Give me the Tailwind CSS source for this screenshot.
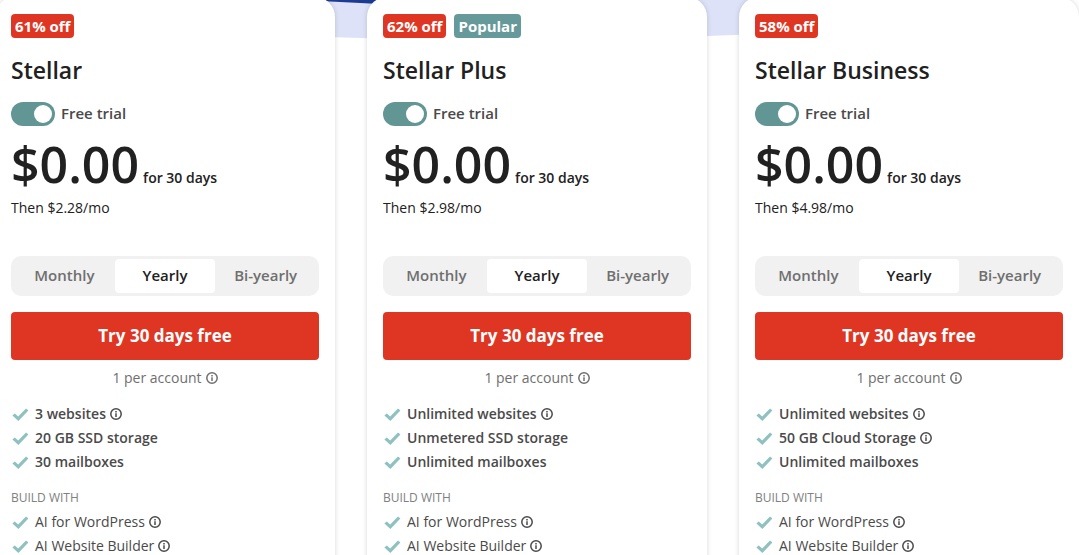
<!DOCTYPE html>
<html lang="en">
<head>
  <meta charset="UTF-8" />
  <meta name="viewport" content="width=device-width, initial-scale=1.0" />
  <title>Hosting Plans</title>
  <script src="https://cdn.jsdelivr.net/npm/@tailwindcss/browser@4"></script>
</head>
<body class="bg-white text-[#4a4a4a] font-['Open_Sans',sans-serif] overflow-x-hidden">

  <!-- Shared icons -->
  <svg class="hidden">
    <symbol id="icon-check" viewBox="0 0 18 16">
      <path d="M1.4 9.6 L3.8 7.4 L7.2 10.4 L15 2.4 L17.4 4.6 L7.4 15 Z" fill="#8fc1c1" />
    </symbol>
    <symbol id="icon-info" viewBox="0 0 12 12">
      <circle cx="6" cy="6" r="5.2" fill="none" stroke="currentColor" stroke-width="1.5" />
      <path d="M6 5.2V9M6 3V4.4" fill="none" stroke="currentColor" stroke-width="1.5" />
    </symbol>
  </svg>

  <main class="relative flow-root">
    <!-- Hero background behind the cards -->
    <svg class="absolute left-0 top-0 w-full h-10" viewBox="0 0 1079 40" preserveAspectRatio="none" aria-hidden="true">
      <path d="M300 0H780V33Q540 45 300 36Z" fill="#dde2f8" />
      <path d="M300 0H440V7Z" fill="#1c3c94" />
    </svg>

    <!-- Plan cards -->
    <section id="plans" class="relative grid grid-cols-3 gap-8 -ml-[5px] -mt-[3px]"></section>
  </main>

  <script>
    const plans = [
      { id: "stellar", name: "Stellar", off: "61% off", then: "$2.28/mo",
        features: [["3 websites", true], ["20 GB SSD storage", false], ["30 mailboxes", false]] },
      { id: "plus", name: "Stellar Plus", off: "62% off", popular: true, then: "$2.98/mo",
        features: [["Unlimited websites", true], ["Unmetered SSD storage", false], ["Unlimited mailboxes", false]] },
      { id: "business", name: "Stellar Business", off: "58% off", then: "$4.98/mo",
        features: [["Unlimited websites", true], ["50 GB Cloud Storage", true], ["Unlimited mailboxes", false]] },
    ];

    const buildWith = [["AI for WordPress", true], ["AI Website Builder", true]];

    const info = `<button type="button" aria-label="More info"><svg class="size-3"><use href="#icon-info" /></svg></button>`;

    function row([label, hasInfo]) {
      return `
        <li class="flex items-center h-6">
          <svg class="w-[18px] h-4 mr-1.5 shrink-0"><use href="#icon-check" /></svg>
          <span class="mr-1">${label}</span>
          ${hasInfo ? info : ""}
        </li>`;
    }

    function card(plan) {
      return `
        <article class="bg-white rounded-[20px] shadow-[0_0_5px_rgba(0,0,0,0.16)] px-4 pt-[17px] pb-6">
          <div class="flex gap-2 text-[15px] leading-6 font-bold text-white">
            <span class="bg-[#df3624] rounded px-1">${plan.off}</span>
            ${plan.popular ? `<span class="bg-[#669999] rounded px-1">Popular</span>` : ""}
          </div>

          <h2 class="mt-4 text-[23px] leading-8 font-semibold text-[#212121]">${plan.name}</h2>

          <div class="mt-4 flex items-center gap-1.5 h-6">
            <input type="checkbox" id="trial-${plan.id}" checked
                   class="appearance-none w-11 h-6 rounded-full bg-gray-300 checked:bg-[#629694] p-[3px] flex checked:justify-end before:size-[18px] before:rounded-full before:bg-white" />
            <label for="trial-${plan.id}" class="text-[15px] leading-6 pb-0.5 font-semibold">Free trial</label>
          </div>

          <p class="mt-2 flex items-baseline gap-1 text-[#212121] font-semibold">
            <span class="text-[50px] leading-[60px]">$0.00</span>
            <span class="text-sm">for 30 days</span>
          </p>
          <p class="mt-0.5 text-sm leading-6 text-[#212121]">Then ${plan.then}</p>

          <div class="mt-9 grid grid-cols-3 h-10 p-[3px] rounded-[10px] bg-[#f1f1f1] text-[15px] font-semibold text-[#6f6f6f]">
            <button type="button" class="pb-0.5">Monthly</button>
            <button type="button" class="pb-0.5 bg-white rounded text-[#212121]">Yearly</button>
            <button type="button" class="pb-0.5">Bi-yearly</button>
          </div>

          <button type="button" class="mt-4 w-full h-12 rounded bg-[#df3624] text-white text-[17px] font-bold">Try 30 days free</button>

          <p class="mt-1.5 flex items-center justify-center gap-1 text-sm leading-6 text-[#6f6f6f]">1 per account ${info}</p>

          <ul class="mt-3 text-sm font-semibold">${plan.features.map(row).join("")}</ul>

          <h3 class="mt-3 text-xs leading-6 text-[#808080]">BUILD WITH</h3>
          <ul class="text-sm">${buildWith.map(row).join("")}</ul>
        </article>`;
    }

    document.getElementById("plans").innerHTML = plans.map(card).join("");
  </script>
</body>
</html>
